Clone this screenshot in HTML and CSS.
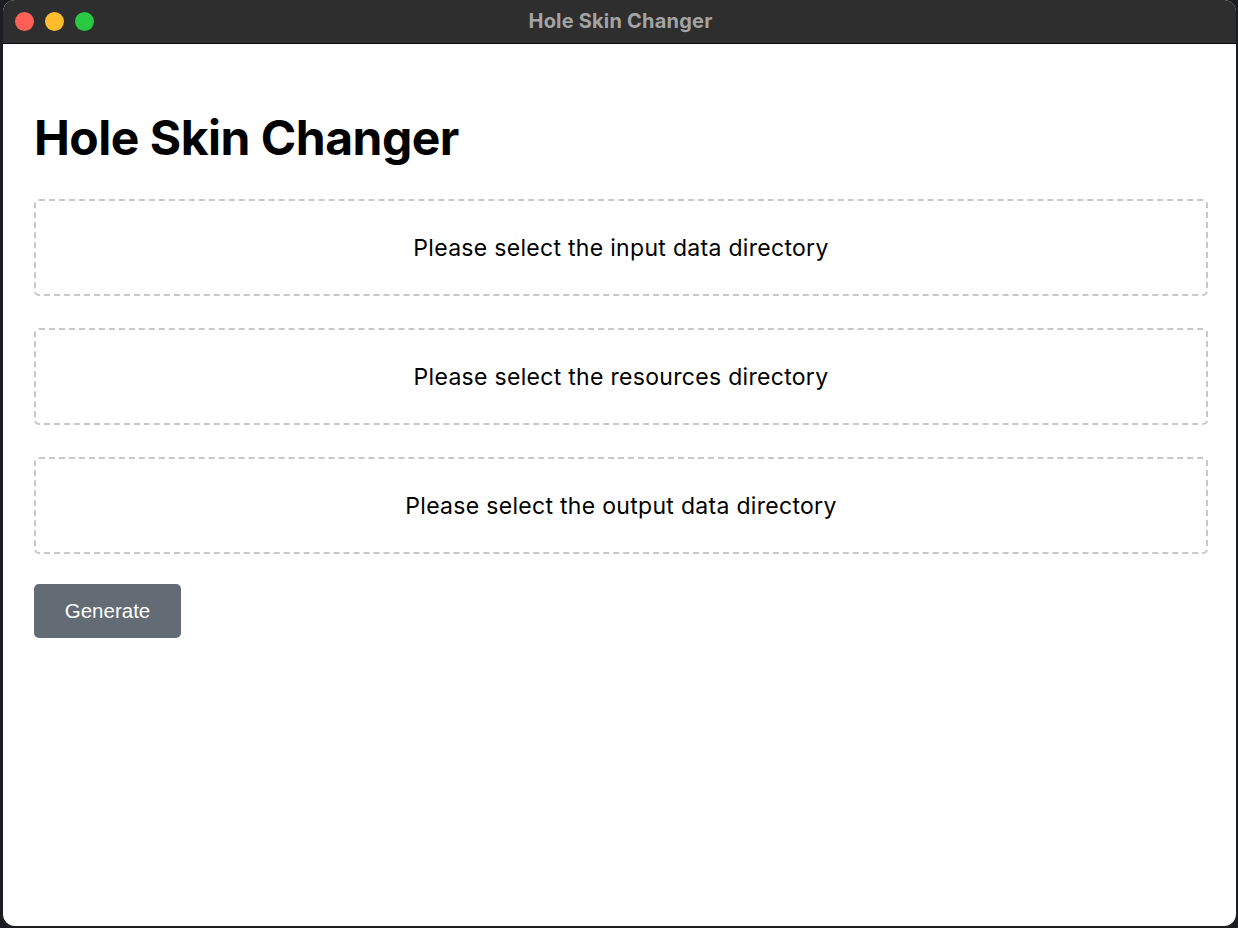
FILE: index.html
```html
<!DOCTYPE html>
<html>
<head>
<meta charset="utf-8">
<link rel="stylesheet" href="styles.css">
</head>
<body>
<div class="window">
  <div class="titlebar">
    <div class="lights">
      <span class="light red"></span>
      <span class="light yellow"></span>
      <span class="light green"></span>
    </div>
    <div class="title">Hole Skin Changer</div>
  </div>
  <div class="content">
    <h1 class="heading">Hole Skin Changer</h1>
    <div class="dropzone">Please select the input data directory</div>
    <div class="dropzone">Please select the resources directory</div>
    <div class="dropzone">Please select the output data directory</div>
    <button class="generate">Generate</button>
  </div>
</div>
</body>
</html>
```
FILE: styles.css
```css
html, body {
  margin: 0;
  padding: 0;
  height: 100%;
}
body {
  background: #1b1d21;
  padding: 0 2px 2px 3px;
  box-sizing: border-box;
}
.window {
  height: 926px;
  width: 1233px;
  background: #ffffff;
  border-radius: 12px;
  overflow: hidden;
  display: flex;
  flex-direction: column;
}
.titlebar {
  height: 43px;
  flex: none;
  background: #2e2e2e;
  border-bottom: 1px solid #0d0d0d;
  position: relative;
  display: flex;
  align-items: center;
  justify-content: center;
}
.lights {
  position: absolute;
  left: 12px;
  top: 12px;
  display: flex;
  gap: 11px;
}
.light {
  width: 19px;
  height: 19px;
  border-radius: 50%;
  display: block;
}
.red { background: #fe5f57; }
.yellow { background: #febc2e; }
.green { background: #28c840; }
.title {
  font-family: Inter, "Liberation Sans", sans-serif;
  font-weight: 700;
  font-size: 20px;
  letter-spacing: 0.2px;
  color: #a3a3a3;
  margin-left: 2px;
  margin-top: -2px;
}
.content {
  padding: 0 28px 0 31px;
  font-family: Inter, "Liberation Sans", sans-serif;
  color: #000;
}
.heading {
  font-family: Inter, "Liberation Sans", sans-serif;
  font-size: 48px;
  font-weight: 700;
  letter-spacing: -0.5px;
  margin: 62px 0 29px;
  line-height: 64px;
}
.dropzone {
  border: 2px dashed #c8c8c8;
  border-radius: 5px;
  height: 93px;
  display: flex;
  align-items: center;
  justify-content: center;
  font-size: 23px;
  letter-spacing: 0.3px;
  margin-bottom: 32px;
}
.dropzone:last-of-type {
  margin-bottom: 30px;
}
.generate {
  background: #636b74;
  color: #fff;
  border: none;
  border-radius: 5px;
  width: 147px;
  height: 54px;
  font-family: "Liberation Sans", Arial, sans-serif;
  font-size: 20.5px;
  padding: 0;
  display: block;
}
```
